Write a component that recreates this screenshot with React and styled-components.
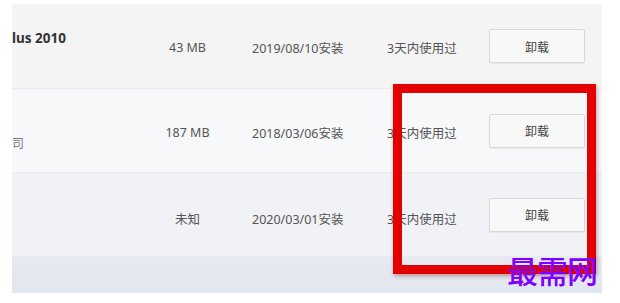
import React from "react";
import styled, { createGlobalStyle } from "styled-components";

const GlobalStyle = createGlobalStyle`
  html, body {
    margin: 0;
    padding: 0;
    background: #ffffff;
  }
  body {
    font-family: "Noto Sans", "Noto Sans CJK SC", sans-serif;
  }
`;

const Page = styled.div`
  width: 620px;
  height: 303px;
  padding: 4px 18px 10px 12px;
  box-sizing: border-box;
  position: relative;
  overflow: hidden;
`;

const Panel = styled.div`
  display: flex;
  flex-direction: column;
  height: 289px;
  overflow: hidden;
`;

const Row = styled.div`
  display: grid;
  grid-template-columns: 138px 75px 27px 135px 102px 96px;
  align-items: center;
  height: ${(p) => p.$height}px;
  background: ${(p) => p.$bg};
  border-bottom: 1px solid ${(p) => p.$line};
  box-sizing: border-box;
  flex-shrink: 0;
`;

const Footer = styled.div`
  flex: 1;
  background: linear-gradient(#e6e9f0, #e2e6ee);
`;

const NameCell = styled.div`
  display: flex;
  flex-direction: column;
  justify-content: center;
  height: 100%;
  padding-top: ${(p) => p.$offset || 0}px;
  box-sizing: border-box;
`;

const NameLine = styled.div`
  height: 21px;
  line-height: 21px;
  font-size: 13.5px;
  font-weight: 700;
  color: #333;
  white-space: nowrap;
`;

const SubLine = styled.div`
  height: 21px;
  line-height: 21px;
  font-size: 12px;
  color: #777;
  white-space: nowrap;
`;

const Cell = styled.div`
  font-size: 12.5px;
  color: #555;
  white-space: nowrap;
  text-align: ${(p) => p.$align || "left"};
  padding-top: ${(p) => p.$dy || 0}px;
`;

const Uninstall = styled.button`
  width: 96px;
  height: 34px;
  padding: 0;
  font-family: "Noto Sans CJK SC", sans-serif;
  font-size: 12px;
  color: #444;
  background: #f8f8f8;
  border: 1px solid #d9d9d9;
  border-radius: 2px;
  box-shadow: 0 1px 1px rgba(0, 0, 0, 0.05);
`;

const Highlight = styled.div`
  position: absolute;
  left: 393px;
  top: 84px;
  width: 203px;
  height: 190px;
  border: 9px solid #e30000;
  box-sizing: border-box;
  box-shadow: 1px 2px 4px rgba(90, 0, 0, 0.35);
  pointer-events: none;
`;

const Watermark = styled.div`
  position: absolute;
  left: 507px;
  top: 249px;
  font-family: "Noto Sans CJK SC", serif;
  font-size: 31px;
  font-weight: 500;
  line-height: 42px;
  color: #8000ff;
  letter-spacing: -1px;
`;

const rows = [
  {
    name: "lus 2010",
    sub: "",
    size: "43 MB",
    date: "2019/08/10安装",
    used: "3天内使用过",
    bg: "#f4f4f4",
    line: "#ebebeb",
    height: 85,
    offset: 6,
    dy: 2,
  },
  {
    name: "",
    sub: "司",
    size: "187 MB",
    date: "2018/03/06安装",
    used: "3天内使用过",
    bg: "#f7f8f9",
    line: "#e9ebee",
    height: 84,
    offset: 4,
    dy: 4,
  },
  {
    name: "",
    sub: "",
    size: "未知",
    date: "2020/03/01安装",
    used: "3天内使用过",
    bg: "#f0f2f5",
    line: "#e8ebf0",
    height: 84,
    offset: 0,
    dy: 8,
  },
];

export default function App() {
  return (
    <>
      <GlobalStyle />
      <Page>
        <Panel>
          {rows.map((r, i) => (
            <Row key={i} $bg={r.bg} $line={r.line} $height={r.height}>
              <NameCell $offset={r.offset}>
                <NameLine>{r.name}</NameLine>
                <SubLine>{r.sub}</SubLine>
              </NameCell>
              <Cell $align="center" $dy={r.dy}>
                {r.size}
              </Cell>
              <span />
              <Cell $dy={r.dy}>{r.date}</Cell>
              <Cell $dy={r.dy}>{r.used}</Cell>
              <Uninstall>卸载</Uninstall>
            </Row>
          ))}
          <Footer />
        </Panel>
        <Highlight />
        <Watermark>最需网</Watermark>
      </Page>
    </>
  );
}
